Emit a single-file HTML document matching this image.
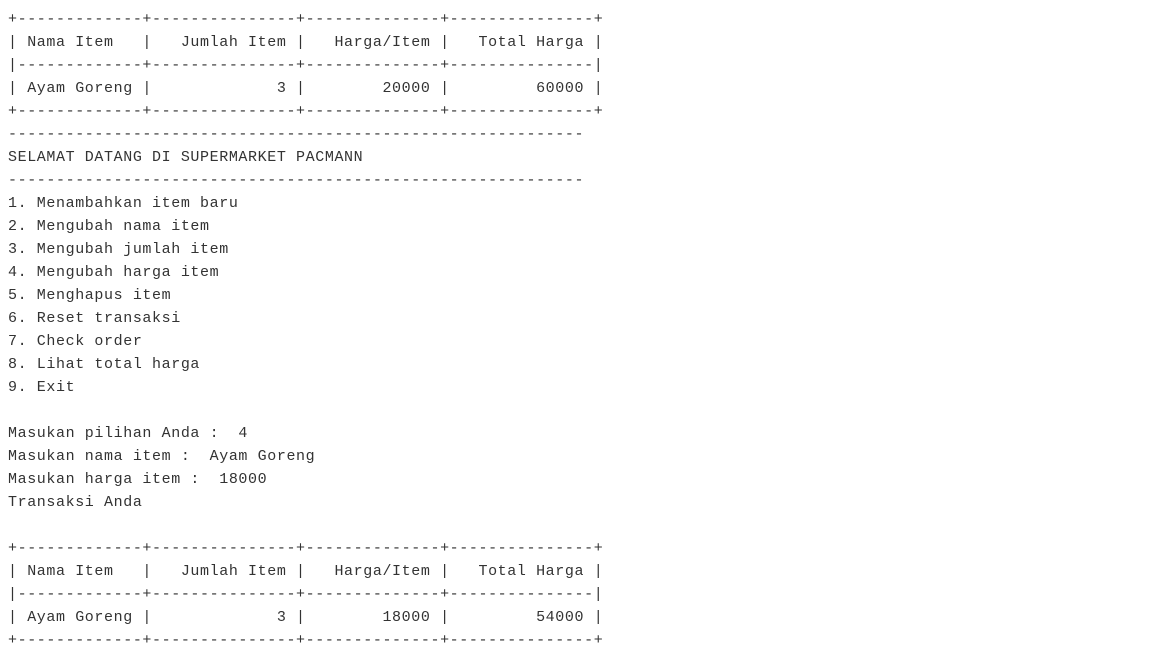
<!DOCTYPE html>
<html><head><meta charset="utf-8"><style>
html,body{margin:0;background:#fff;width:1152px;height:650px;overflow:hidden}
pre{margin:0;padding:8px 0 0 8px;font-family:"Liberation Mono",monospace;font-size:15px;letter-spacing:0.6px;line-height:23px;color:#333}
</style></head><body><pre>+-------------+---------------+--------------+---------------+
| Nama Item   |   Jumlah Item |   Harga/Item |   Total Harga |
|-------------+---------------+--------------+---------------|
| Ayam Goreng |             3 |        20000 |         60000 |
+-------------+---------------+--------------+---------------+
------------------------------------------------------------
SELAMAT DATANG DI SUPERMARKET PACMANN
------------------------------------------------------------
1. Menambahkan item baru
2. Mengubah nama item
3. Mengubah jumlah item
4. Mengubah harga item
5. Menghapus item
6. Reset transaksi
7. Check order
8. Lihat total harga
9. Exit

Masukan pilihan Anda :  4
Masukan nama item :  Ayam Goreng
Masukan harga item :  18000
Transaksi Anda

+-------------+---------------+--------------+---------------+
| Nama Item   |   Jumlah Item |   Harga/Item |   Total Harga |
|-------------+---------------+--------------+---------------|
| Ayam Goreng |             3 |        18000 |         54000 |
+-------------+---------------+--------------+---------------+</pre></body></html>
